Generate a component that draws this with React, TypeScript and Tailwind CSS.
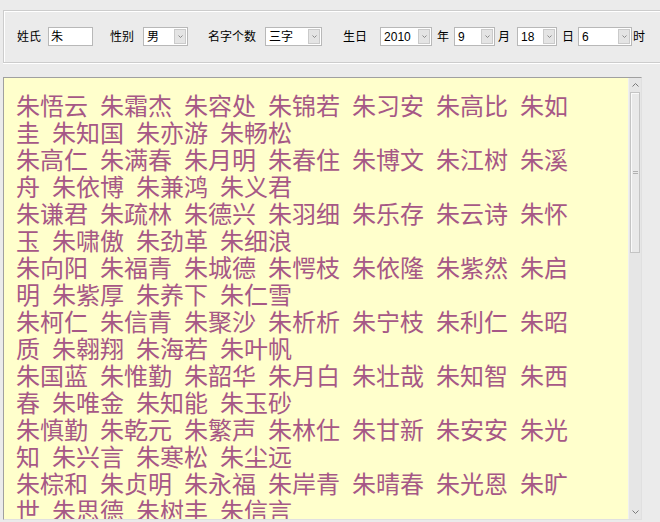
import React from "react";

const rows: string[][] = [
  ["朱悟云", "朱霜杰", "朱容处", "朱锦若", "朱习安", "朱高比", "朱如圭", "朱知国", "朱亦游", "朱畅松"],
  ["朱高仁", "朱满春", "朱月明", "朱春住", "朱博文", "朱江树", "朱溪舟", "朱依博", "朱兼鸿", "朱义君"],
  ["朱谦君", "朱疏林", "朱德兴", "朱羽细", "朱乐存", "朱云诗", "朱怀玉", "朱啸傲", "朱劲革", "朱细浪"],
  ["朱向阳", "朱福青", "朱城德", "朱愕枝", "朱依隆", "朱紫然", "朱启明", "朱紫厚", "朱养下", "朱仁雪"],
  ["朱柯仁", "朱信青", "朱聚沙", "朱析析", "朱宁枝", "朱利仁", "朱昭质", "朱翱翔", "朱海若", "朱叶帆"],
  ["朱国蓝", "朱惟勤", "朱韶华", "朱月白", "朱壮哉", "朱知智", "朱西春", "朱唯金", "朱知能", "朱玉砂"],
  ["朱慎勤", "朱乾元", "朱繁声", "朱林仕", "朱甘新", "朱安安", "朱光知", "朱兴言", "朱寒松", "朱尘远"],
  ["朱棕和", "朱贞明", "朱永福", "朱岸青", "朱晴春", "朱光恩", "朱旷世", "朱思德", "朱树丰", "朱信言"],
];

const ui = { fontFamily: '"Liberation Sans", "Noto Sans CJK SC", sans-serif' };

function Arrow({ up = false }: { up?: boolean }) {
  return (
    <svg width="7" height="4" viewBox="0 0 7 4" className={up ? "rotate-180" : ""}>
      <path d="M0.5 0.5 L3.5 3.5 L6.5 0.5" fill="none" stroke="#7a7a7a" strokeWidth="1" />
    </svg>
  );
}

function Combo({ value, width, ml }: { value: string; width: string; ml: string }) {
  return (
    <div className={`${width} ${ml} h-[19px] flex items-center bg-white border border-[#b8b8b8]`}>
      <span className="flex-1 pl-[3px] text-[12px] leading-none text-black">{value}</span>
      <div className="w-[12px] h-[15px] mr-[1px] flex items-center justify-center bg-[#e4e4e4] border border-[#cacaca]">
        <svg width="5" height="3" viewBox="0 0 5 3">
          <path d="M0.5 0.5 L2.5 2.5 L4.5 0.5" fill="none" stroke="#8a8a8a" strokeWidth="1" />
        </svg>
      </div>
    </div>
  );
}

function Label({ text, ml }: { text: string; ml: string }) {
  return <span className={`${ml} text-[12px] leading-none text-black whitespace-nowrap`}>{text}</span>;
}

export default function App() {
  return (
    <div className="w-[660px] h-[522px] overflow-hidden bg-[#ebebeb]" style={ui}>
      {/* 条件栏 */}
      <div className="mt-[10px] ml-[3px] h-[53px] flex items-center border border-r-0 border-[#cccccc] shadow-[inset_1px_1px_0_#ffffff,0_1px_0_#ffffff]">
        <Label text="姓氏" ml="ml-[13px]" />
        <div className="ml-[7px] w-[45px] h-[19px] flex items-center bg-white border border-[#b8b8b8]">
          <span className="pl-[2px] text-[12px] leading-none">朱</span>
        </div>
        <Label text="性别" ml="ml-[17px]" />
        <Combo value="男" width="w-[45px]" ml="ml-[9px]" />
        <Label text="名字个数" ml="ml-[20px]" />
        <Combo value="三字" width="w-[57px]" ml="ml-[9px]" />
        <Label text="生日" ml="ml-[21px]" />
        <Combo value="2010" width="w-[52px]" ml="ml-[13px]" />
        <Label text="年" ml="ml-[5px]" />
        <Combo value="9" width="w-[41px]" ml="ml-[5px]" />
        <Label text="月" ml="ml-[3px]" />
        <Combo value="18" width="w-[40px]" ml="ml-[7px]" />
        <Label text="日" ml="ml-[5px]" />
        <Combo value="6" width="w-[54px]" ml="ml-[4px]" />
        <Label text="时" ml="ml-[1px]" />
      </div>

      {/* 结果文本框 */}
      <div className="mt-[14px] ml-[3px] w-[639px] h-[443px] flex border border-t-[#a0a0a0] border-l-[#a0a0a0] border-r-[#e0e0e0] border-b-[#e0e0e0] bg-[#ffffcc] overflow-hidden">
        <div
          className="flex-1 pl-[12px] pt-[13px] overflow-hidden text-[24px] leading-[27px] text-[#a65886]"
          style={{ fontFamily: '"Noto Sans CJK SC", sans-serif' }}
        >
          <div className="w-[564px]">
            {rows.map((names, i) => (
              <div key={i}>
                {names.map((n, j) => (
                  <React.Fragment key={j}>
                    {j > 0 && <span className="inline-block w-[12px]" />}
                    {n}
                  </React.Fragment>
                ))}
              </div>
            ))}
          </div>
        </div>

        {/* 滚动条 */}
        <div className="w-[13px] flex flex-col bg-[#e6e6e6] border-l border-[#f0f0f0]">
          <div className="h-[14px] flex items-center justify-center">
            <Arrow up />
          </div>
          <div className="h-[161px] mx-[1px] flex items-center justify-center bg-[#e9e9e9] border border-[#c4c4c4] shadow-[inset_1px_1px_0_#fafafa]">
            <div className="w-[5px] flex flex-col gap-[1px]">
              <div className="h-px bg-[#b0b0b0]" />
              <div className="h-px bg-[#b0b0b0]" />
            </div>
          </div>
          <div className="flex-1" />
          <div className="h-[14px] flex items-center justify-center">
            <Arrow />
          </div>
        </div>
      </div>
    </div>
  );
}
